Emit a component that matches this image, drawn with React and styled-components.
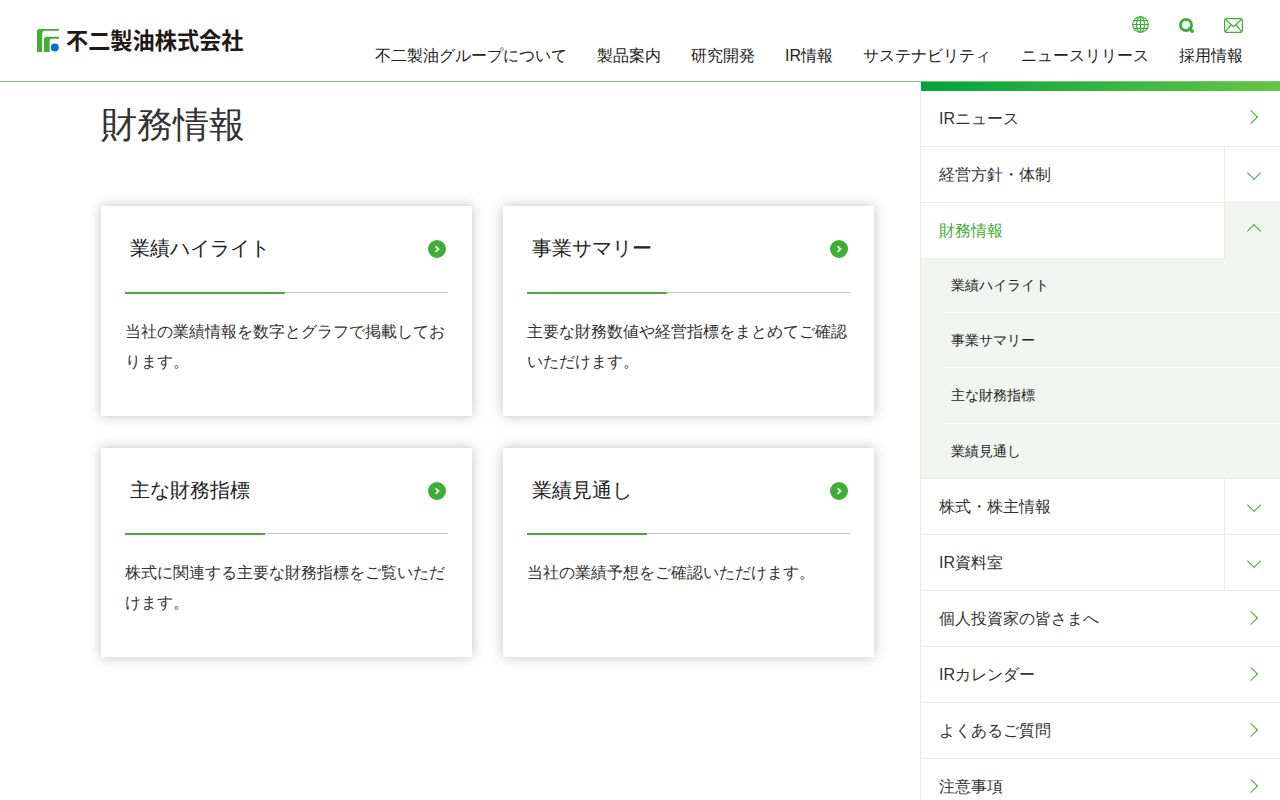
import styled, { createGlobalStyle } from "styled-components"

const menuHeader = [
    "不二製油グループについて",
    "製品案内",
    "研究開発",
    "IR情報",
    "サステナビリティ",
    "ニュースリリース",
    "採用情報",
]

const cards = [
    { id: 1, title: "業績ハイライト", text: "当社の業績情報を数字とグラフで掲載しております。" },
    { id: 2, title: "事業サマリー", text: "主要な財務数値や経営指標をまとめてご確認いただけます。" },
    { id: 3, title: "主な財務指標", text: "株式に関連する主要な財務指標をご覧いただけます。" },
    { id: 4, title: "業績見通し", text: "当社の業績予想をご確認いただけます。" },
]

const menuSide = [
    { name: "IRニュース" },
    { name: "経営方針・体制", toggle: true },
    {
        name: "財務情報",
        toggle: true,
        open: true,
        sub: ["業績ハイライト", "事業サマリー", "主な財務指標", "業績見通し"],
    },
    { name: "株式・株主情報", toggle: true },
    { name: "IR資料室", toggle: true },
    { name: "個人投資家の皆さまへ" },
    { name: "IRカレンダー" },
    { name: "よくあるご質問" },
    { name: "注意事項" },
]

function LogoMark() {
    return (
        <svg width="23" height="24" viewBox="0 0 23 24">
            <path d="M0 23V2.5Q0 0 2.5 0H22V1.8H8Q5.2 1.8 5.2 4.6V23Z" fill="#45ad35" />
            <path d="M7 23V10.3Q7 7.8 9.5 7.8H22V9.8H15Q12.6 9.8 12.6 12.2V23Z" fill="#45ad35" />
            <circle cx="17.8" cy="18.4" r="4" fill="#0b74c4" />
        </svg>
    )
}

function GlobeIcon() {
    return (
        <svg width="17" height="17" viewBox="0 0 17 17" fill="none" stroke="#3fae35" strokeWidth="1.1">
            <circle cx="8.5" cy="8.5" r="7.8" />
            <ellipse cx="8.5" cy="8.5" rx="4" ry="7.8" />
            <path d="M8.5 .7V16.3M.7 8.5H16.3M1.8 4.6H15.2M1.8 12.4H15.2" />
        </svg>
    )
}

function SearchIcon() {
    return (
        <svg width="16" height="16" viewBox="0 0 16 16" fill="none" stroke="#3fae35">
            <circle cx="7" cy="7" r="5.5" strokeWidth="2.9" />
            <path d="M10.6 10.6L13.2 13.2" strokeWidth="3.4" strokeLinecap="round" />
        </svg>
    )
}

function MailIcon() {
    return (
        <svg width="19" height="15" viewBox="0 0 19 15" fill="none" stroke="#3fae35" strokeWidth="1.2">
            <rect x=".6" y=".6" width="17.8" height="13.8" rx="1.8" />
            <path d="M1.2 1.2L9.5 8.8L17.8 1.2M1.2 13.8L6.8 7M17.8 13.8L12.2 7" />
        </svg>
    )
}

export default function App() {
    return (
        <>
            <GlobalStyle />
            <Header>
                <Logo>
                    <LogoMark />
                    <LogoName>不二製油株式会社</LogoName>
                </Logo>
                <HeaderRight>
                    <IconList>
                        <GlobeIcon />
                        <SearchIcon />
                        <MailIcon />
                    </IconList>
                    <Nav>
                        {menuHeader.map((item) => (
                            <a key={item}>{item}</a>
                        ))}
                    </Nav>
                </HeaderRight>
            </Header>

            <PageContainer>
                <Main>
                    <PageTitle>財務情報</PageTitle>
                    <CardsContainer>
                        {cards.map((card) => (
                            <Card key={card.id}>
                                <CardHead>
                                    <CardTitle>{card.title}</CardTitle>
                                    <CardArrow>
                                        <svg width="18" height="18" viewBox="0 0 18 18" fill="none">
                                            <path d="M7.6 6.3L10.5 9.1L7.6 11.9" stroke="#fff" strokeWidth="1.6" />
                                        </svg>
                                    </CardArrow>
                                </CardHead>
                                <CardText>{card.text}</CardText>
                            </Card>
                        ))}
                    </CardsContainer>
                </Main>

                <Sidebar>
                    <SidebarBar />
                    {menuSide.map((item) => (
                        <div key={item.name}>
                            <SideItem $open={item.open}>
                                <SideName $open={item.open}>{item.name}</SideName>
                                <SideButton $toggle={item.toggle} $open={item.open}>
                                    <Chevron $dir={item.open ? "up" : item.toggle ? "down" : "right"} />
                                </SideButton>
                            </SideItem>
                            {item.sub && (
                                <SubMenu>
                                    {item.sub.map((name) => (
                                        <SubItem key={name}>{name}</SubItem>
                                    ))}
                                </SubMenu>
                            )}
                        </div>
                    ))}
                </Sidebar>
            </PageContainer>
        </>
    )
}

const GlobalStyle = createGlobalStyle`
    * {
        box-sizing: border-box;
    }
    body {
        margin: 0;
        height: 800px;
        overflow: hidden;
        background: #fff;
        color: #333;
        font-family: "Liberation Sans", sans-serif;
        font-size: 16px;
    }
    svg {
        display: block;
    }
`
const Header = styled.header`
    height: 82px;
    padding: 0 37px;
    display: flex;
    justify-content: space-between;
    border-bottom: 1px solid #7cc572;
`
const Logo = styled.div`
    display: flex;
    align-items: flex-start;
    gap: 6px;
    margin-top: 29px;
`
const LogoName = styled.span`
    margin-top: -2px;
    color: #231815;
    font-family: "Noto Sans CJK JP", sans-serif;
    font-size: 22.2px;
    font-weight: 700;
    line-height: 24px;
    white-space: nowrap;
`
const HeaderRight = styled.div`
    display: flex;
    flex-direction: column;
    align-items: flex-end;
    padding-top: 16px;
`
const IconList = styled.div`
    display: flex;
    align-items: flex-start;
    gap: 30px;
    height: 18px;
    svg:nth-child(n + 2) {
        margin-top: 2px;
    }
    svg:last-child {
        margin-left: -1px;
    }
`
const Nav = styled.nav`
    display: flex;
    gap: 30px;
    margin-top: 10px;
    color: #222;
    line-height: 24px;
    white-space: nowrap;
`
const PageContainer = styled.div`
    display: flex;
    height: 718px;
`
const Main = styled.main`
    width: 920px;
    padding: 16px 46px 0 101px;
`
const PageTitle = styled.h1`
    margin: 0;
    font-size: 36px;
    font-weight: 400;
    line-height: 54px;
`
const CardsContainer = styled.div`
    display: grid;
    grid-template-columns: 371px 371px;
    grid-auto-rows: 209.6px;
    gap: 32px 31px;
    margin-top: 54px;
`
const Card = styled.section`
    padding: 24px;
    background: #fff;
    box-shadow: 0 0 12px rgba(0, 0, 0, 0.25);
`
const CardHead = styled.div`
    display: flex;
    justify-content: space-between;
    height: 62.6px;
    border-bottom: 1px solid #c4c4c4;
`
const CardTitle = styled.h2`
    height: 63.6px;
    margin: 0;
    padding: 0 15px 0 5px;
    border-bottom: 2px solid #48a93c;
    color: #222;
    font-size: 20px;
    font-weight: 400;
    line-height: 36px;
`
const CardArrow = styled.span`
    width: 18px;
    height: 18px;
    margin: 10px 2px 0 0;
    border-radius: 50%;
    background: #3fae35;
`
const CardText = styled.p`
    margin: 24px 0 0;
    line-height: 30px;
    word-break: break-all;
`
const Sidebar = styled.aside`
    width: 360px;
    border-left: 1px solid #e8ebe8;
    overflow: hidden;
`
const SidebarBar = styled.div`
    height: 9px;
    background: linear-gradient(135deg, #00a33e, #66c742);
`
const SideItem = styled.div`
    display: flex;
    height: ${(props) => (props.$open ? "55px" : "56px")};
    border-bottom: ${(props) => (props.$open ? "none" : "1px solid #e8ebe8")};
`
const SideName = styled.a`
    flex: 1;
    padding-left: 18px;
    line-height: 55px;
    color: ${(props) => (props.$open ? "#3fae35" : "#333")};
`
const SideButton = styled.span`
    width: 56px;
    display: flex;
    align-items: center;
    justify-content: center;
    border-left: 1px solid ${(props) => (props.$toggle ? "#e8ebe8" : "transparent")};
    background: ${(props) => (props.$open ? "#f1f5f0" : "none")};
`
const margins = {
    right: "0 3px 2.2px 0",
    down: "0 0 3.2px 2px",
    up: "1px 0 0 2px",
}
const angles = { right: 45, down: 135, up: -45 }

const Chevron = styled.i`
    width: 10px;
    height: 10px;
    margin: ${(props) => margins[props.$dir]};
    border: solid #3fae35;
    border-width: 1px 1px 0 0;
    transform: rotate(${(props) => angles[props.$dir]}deg);
`
const SubMenu = styled.div`
    height: 221.4px;
    padding-left: 20px;
    background: #f1f5f0;
    border-bottom: 1px solid #e8ebe8;
`
const SubItem = styled.a`
    display: block;
    height: 55.2px;
    padding-left: 10px;
    border-bottom: 1px solid #fff;
    color: #222;
    font-size: 14px;
    line-height: 54px;
    &:last-child {
        border-bottom: none;
    }
`
